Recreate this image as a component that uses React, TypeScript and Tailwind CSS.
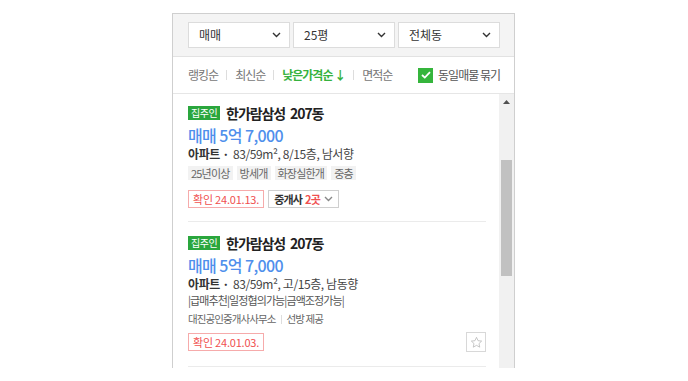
import React from "react";

const FONT = { fontFamily: '"Noto Sans CJK KR", "Noto Sans", sans-serif' };

const SELECTS = ["매매", "25평", "전체동"];
const SORTS = ["랭킹순", "최신순", "낮은가격순 ↓", "면적순"];

const Chevron = ({ className = "" }: { className?: string }) => (
  <svg width="9" height="6" viewBox="0 0 9 6" className={className}>
    <path d="M1 1l3.5 3.5L8 1" fill="none" stroke="currentColor" strokeWidth="1.4" />
  </svg>
);

const Badge = () => (
  <span className="h-[14px] px-[3px] bg-[#2aa63d] text-white text-[10px] leading-[14px] tracking-[-0.5px]">
    집주인
  </span>
);

const TitleRow = () => (
  <div className="flex items-center h-[18px] gap-[6px]">
    <Badge />
    <span className="text-[14px] font-bold text-[#222] tracking-[-1.1px] [word-spacing:3px] leading-[18px]">
      한가람삼성 207동
    </span>
  </div>
);

const Price = () => (
  <div className="mt-[2px] text-[16px] font-medium leading-[22px] text-[#4f8fec] tracking-[-0.6px]">
    매매 5억 7,000
  </div>
);

const Details = ({ text }: { text: string }) => (
  <div className="flex items-center gap-[4px] text-[12px] leading-[16px] text-[#444]">
    <span className="font-bold text-[#333] tracking-[-0.4px]">아파트 ·</span>
    <span className="tracking-[-0.4px]">{text}</span>
  </div>
);

const Confirm = ({ date }: { date: string }) => (
  <span className="h-[18px] px-[4px] border border-[#f6abab] text-[11px] leading-[16px] text-[#f05050] tracking-[-0.2px]">
    확인 {date}
  </span>
);

export default function App() {
  return (
    <div className="w-[688px] h-[381px] bg-white" style={FONT}>
      <div className="ml-[172px] pt-[13px] w-[343px]">
        <div className="h-[355px] border-t border-l border-r border-[#cfcfcf] flex flex-col">
          {/* filters */}
          <div className="h-[43px] bg-[#f4f4f4] border-b border-[#e2e2e2] flex items-center gap-[3px] pl-[15px]">
            {SELECTS.map((s) => (
              <div
                key={s}
                className="w-[102px] h-[26px] bg-white border border-[#dcdcdc] flex items-center justify-between pl-[10px] pr-[8px] text-[12px] text-[#333]"
              >
                <span>{s}</span>
                <Chevron className="text-[#333]" />
              </div>
            ))}
          </div>

          {/* sort */}
          <div className="h-[37px] border-b border-[#e6e6e6] flex items-center pl-[15px] pr-[14px]">
            {SORTS.map((s, i) => (
              <React.Fragment key={s}>
                {i > 0 && <span className="w-px h-[10px] bg-[#dddddd] mx-[8px]" />}
                <span
                  className={
                    i === 2
                      ? "text-[12px] font-bold text-[#36b23e] tracking-[-1px]"
                      : "text-[12px] text-[#777] tracking-[-1px]"
                  }
                >
                  {s}
                </span>
              </React.Fragment>
            ))}
            <div className="ml-auto flex items-center gap-[5px]">
              <span className="w-[15px] h-[15px] bg-[#35b53c] flex items-center justify-center">
                <svg width="10" height="8" viewBox="0 0 10 8">
                  <path d="M1 4l2.8 2.6L9 1.2" fill="none" stroke="white" strokeWidth="1.8" />
                </svg>
              </span>
              <span className="text-[12px] text-[#555] tracking-[-1px]">동일매물 묶기</span>
            </div>
          </div>

          {/* list */}
          <div className="flex h-[274px]">
            <div className="flex-1 pl-[15px] pr-[13px]">
              {/* item 1 */}
              <div className="pt-[10px] pb-[13px] border-b border-[#ebebeb]">
                <TitleRow />
                <Price />
                <Details text="83/59m², 8/15층, 남서향" />
                <div className="mt-[4px] flex gap-[4px]">
                  {["25년이상", "방세개", "화장실한개", "중층"].map((t) => (
                    <span
                      key={t}
                      className="h-[14px] px-[3px] bg-[#f2f2f2] text-[11px] leading-[14px] text-[#666] tracking-[-0.8px]"
                    >
                      {t}
                    </span>
                  ))}
                </div>
                <div className="mt-[10px] flex gap-[4px]">
                  <Confirm date="24.01.13." />
                  <span className="h-[18px] px-[5px] border border-[#cfcfcf] flex items-center gap-[4px] text-[11px] tracking-[-0.8px]">
                    <span className="text-[#333] font-bold">중개사</span>
                    <span className="text-[#f05050] font-bold -ml-[1px]">2곳</span>
                    <Chevron className="text-[#888]" />
                  </span>
                </div>
              </div>

              {/* item 2 */}
              <div className="pt-[12px] pb-[14px] border-b border-[#ebebeb]">
                <TitleRow />
                <Price />
                <Details text="83/59m², 고/15층, 남동향" />
                <div className="text-[11px] leading-[16px] text-[#555] tracking-[-0.9px]">
                  |급매추천|일정협의가능|금액조정가능|
                </div>
                <div className="mt-[3px] flex items-center text-[10.5px] leading-[16px] text-[#666] tracking-[-0.9px]">
                  <span>대진공인중개사사무소</span>
                  <span className="w-px h-[9px] bg-[#dddddd] mx-[5px]" />
                  <span>선방 제공</span>
                </div>
                <div className="mt-[5px] flex items-center justify-between h-[20px]">
                  <Confirm date="24.01.03." />
                  <span className="w-[20px] h-[20px] border border-[#d8d8d8] flex items-center justify-center">
                    <svg width="13" height="13" viewBox="0 0 24 24">
                      <path
                        d="M12 2.5l2.9 6.2 6.6.7-4.9 4.6 1.4 6.6L12 17.3l-6 3.3 1.4-6.6-4.9-4.6 6.6-.7z"
                        fill="none"
                        stroke="#b5b5b5"
                        strokeWidth="1.4"
                        strokeLinejoin="round"
                      />
                    </svg>
                  </span>
                </div>
              </div>
            </div>

            {/* scrollbar */}
            <div className="w-[15px] bg-[#f1f1f1] flex flex-col items-center">
              <div className="h-[16px] flex items-center justify-center">
                <svg width="7" height="4" viewBox="0 0 7 4">
                  <path d="M0 4L3.5 0L7 4z" fill="#505050" />
                </svg>
              </div>
              <div className="mt-[50px] w-[11px] h-[116px] bg-[#c1c1c1]" />
            </div>
          </div>
        </div>
      </div>
    </div>
  );
}
